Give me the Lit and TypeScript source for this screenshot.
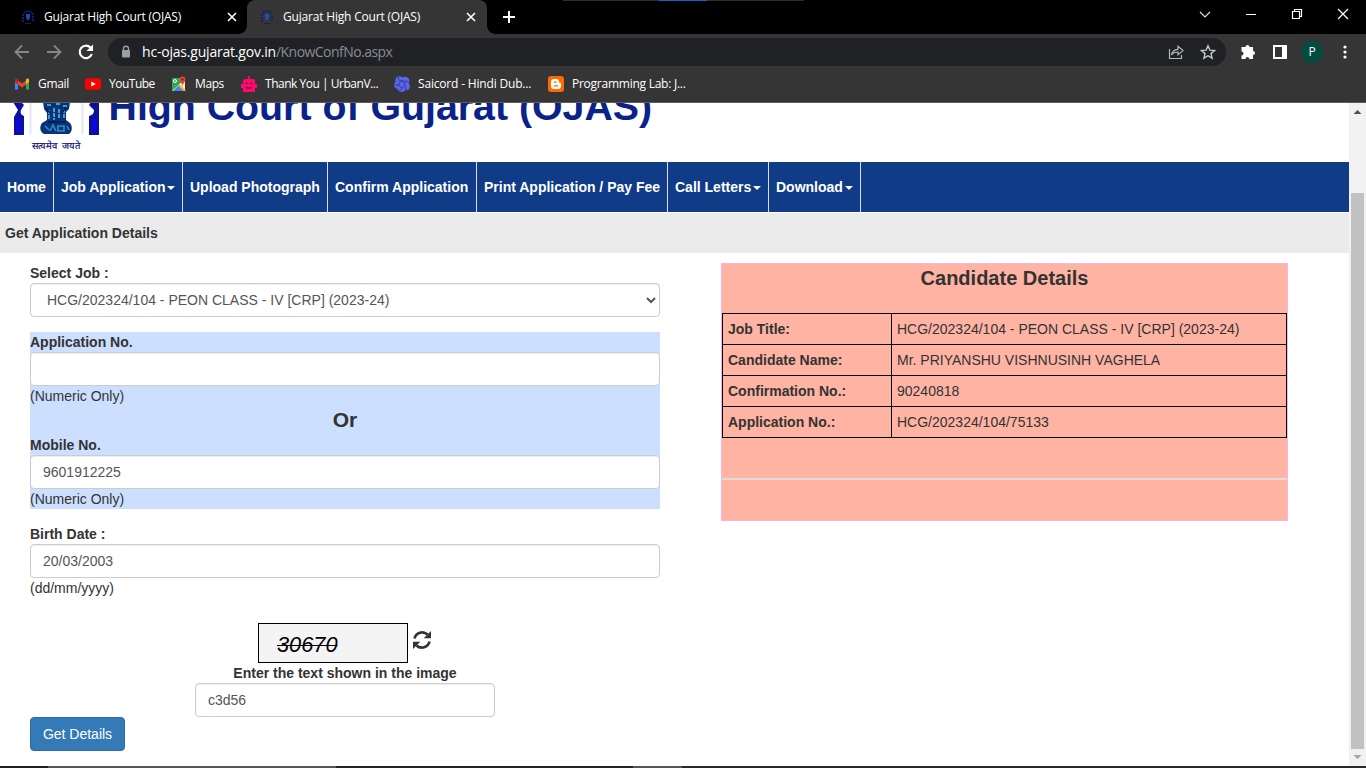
import { LitElement, html, css, svg } from "lit";
import { customElement } from "lit/decorators.js";

const favicon = svg`<path d="M3 13V7a5 5 0 0 1 10 0v6" fill="none" stroke="#18206e" stroke-width="2" stroke-dasharray="2 1"/><path d="M6 5h4v3l-1 3H7L6 8z" fill="#1d4fae"/><path d="M5 14.500h6" stroke="#1b1f4d"/>`;

@customElement("browser-chrome")
export class BrowserChrome extends LitElement {
  static styles = css`
    :host { display: block; position: relative; height: 103px; background: #353535; color: #fff; font: 12px/16px "Open Sans", "Noto Sans", sans-serif; box-sizing: border-box; border-bottom: 1px solid #5b5b5b; }
    svg { display: block; flex: none; }
    .edge { position: absolute; top: 0; left: 563px; width: 241px; height: 1px; background: linear-gradient(90deg, #2d2d2d 96px, #0a67c4 96px 144px, #2d2d2d 144px); }
    .tabs { display: flex; height: 34px; background: #000; }
    .tab { display: flex; align-items: center; box-sizing: border-box; width: 247px; padding: 0 9px 0 20px; }
    .tab.active { width: 240px; padding-left: 12px; background: #353535; border-radius: 8px 8px 0 0; padding-right: 10px; position: relative; }
    .tab.active::before, .tab.active::after { content: ""; position: absolute; bottom: 0; width: 8px; height: 8px; }
    .tab.active::before { left: -8px; background: radial-gradient(circle at 0 0, #000 7.500px, #353535 8px); }
    .tab.active::after { right: -8px; background: radial-gradient(circle at 100% 0, #000 7.500px, #353535 8px); }
    .label { flex: 1; margin-left: 8px; white-space: nowrap; letter-spacing: -.19px; }
    .plus { margin: 10px 0 0 15px; }
    .win { display: flex; margin-left: auto; padding: 7px 15px 0 0; gap: 30px; }
    .tools { display: flex; align-items: center; height: 36px; padding-left: 14px; }
    .back { margin-right: 16px; }
    .fwd { margin-right: 15px; }
    .omni { display: flex; align-items: center; box-sizing: border-box; width: 1118px; height: 28px; margin-left: 13px; padding: 0 10px 0 12px; border-radius: 14px; background: #202124; font-size: 14px; line-height: 28px; }
    .url { margin-left: 10px; flex: 1; letter-spacing: -.2px; }
    .path { color: #9aa0a6; opacity: .85; letter-spacing: -.54px; }
    .star { margin-left: 16px; }
    .ext { margin-left: 14px; }
    .panel { margin-left: 17px; }
    .avatar { width: 22px; height: 22px; margin-left: 14px; border-radius: 50%; background: #004d40; text-align: center; line-height: 22px; }
    .dots { margin-left: 20px; }
    .marks { display: flex; align-items: center; height: 28px; padding-left: 14px; }
    .mark { display: flex; align-items: center; gap: 8px; box-sizing: border-box; white-space: nowrap; }
    .gm { width: 71px; letter-spacing: -.3px; } .yt { width: 86px; letter-spacing: -.5px; } .mp { width: 70px; letter-spacing: -.4px; }
    .uv { width: 153px; letter-spacing: -.48px; } .sc { width: 154px; letter-spacing: -.18px; } .bl { letter-spacing: -.25px; }
  `;
  tab(active: boolean) {
    return html`<div class="tab ${active ? "active" : ""}">
      <svg width="16" height="16" viewBox="0 0 16 16">${favicon}</svg>
      <span class="label">Gujarat High Court (OJAS)</span>
      <svg width="12" height="12" viewBox="0 0 12 12"><path d="M2 2l8 8M10 2l-8 8" stroke="#fff" stroke-width="1.600"/></svg>
    </div>`;
  }
  render() {
    return html`
      <div class="tabs">
        ${this.tab(false)}${this.tab(true)}
        <svg class="plus" width="14" height="14" viewBox="0 0 14 14"><path d="M7 1v12M1 7h12" stroke="#fff" stroke-width="2"/></svg>
        <div class="win">
          <svg width="16" height="16" viewBox="0 0 16 16"><path d="M3 5l5 5 5-5" fill="none" stroke="#ddd" stroke-width="1.200"/></svg>
          <svg width="16" height="16" viewBox="0 0 16 16"><path d="M3 7.500h10" stroke="#fff"/></svg>
          <svg width="16" height="16" viewBox="0 0 16 16"><path d="M3.500 4.500h7v7h-7zM5.500 4V2.500h7v7H11" fill="none" stroke="#fff" stroke-width="1.200"/></svg>
          <svg width="16" height="16" viewBox="0 0 16 16"><path d="M3 2l10 10M13 2L3 12" stroke="#fff" stroke-width="1.200"/></svg>
        </div>
      </div>
      <div class="edge"></div>
      <div class="tools">
        <svg class="back" width="16" height="16" viewBox="0 0 16 16"><path d="M15 8H2M8 1.500L1.500 8 8 14.500" fill="none" stroke="#868686" stroke-width="1.800"/></svg>
        <svg class="fwd" width="16" height="16" viewBox="0 0 16 16"><path d="M1 8h13M8 1.500L14.500 8 8 14.500" fill="none" stroke="#868686" stroke-width="1.800"/></svg>
        <svg width="18" height="18" viewBox="0 0 18 18"><path d="M14.800 11A6.200 6.200 0 1 1 13.400 4.600" fill="none" stroke="#fff" stroke-width="2.200"/><path d="M16 1.500V8H9.500z" fill="#fff"/></svg>
        <div class="omni">
          <svg width="12" height="14" viewBox="0 0 12 14"><path d="M3.500 6V3.700a2.500 2.500 0 0 1 5 0V6" fill="none" stroke="#9aa0a6" stroke-width="1.400"/><rect x="2" y="5" width="8" height="7.500" rx="1" fill="#9aa0a6"/></svg>
          <span class="url">hc-ojas.gujarat.gov.in<span class="path">/KnowConfNo.aspx</span></span>
          <svg width="16" height="16" viewBox="0 0 16 16"><path d="M1.500 5v9.500h12V11M3.500 11c.6-4 3-5.500 6.500-5.700V2.200L15.200 6.500 10 10.800V8c-3 0-5 .8-6.500 3z" fill="none" stroke="#b4b7ba" stroke-width="1.200"/></svg>
          <svg class="star" width="16" height="16" viewBox="0 0 16 16"><path d="M8 1.800l1.900 4.300 4.700.4-3.600 3.100 1.100 4.600L8 11.700l-4.100 2.500L5 9.600 1.400 6.500l4.700-.4z" fill="none" stroke="#c5c7c9" stroke-width="1.400"/></svg>
        </div>
        <svg class="ext" width="16" height="16" viewBox="0 0 16 16"><path d="M2 3h3.500a2 2 0 0 1 4 0H13v4a2 2 0 0 1 0 4v4H9.300a1.900 1.900 0 0 0-3.800 0H1.500v-3.500a2 2 0 0 0 0-4V3z" fill="#fff"/></svg>
        <svg class="panel" width="14" height="14" viewBox="0 0 14 14"><path d="M0 0h14v14H0zM2 2v10h7V2z" fill="#fff" fill-rule="evenodd"/></svg>
        <div class="avatar">P</div>
        <svg class="dots" width="4" height="14" viewBox="0 0 4 14" fill="#fff"><circle cx="2" cy="2" r="1.600"/><circle cx="2" cy="7" r="1.600"/><circle cx="2" cy="12" r="1.600"/></svg>
      </div>
      <div class="marks">
        <div class="mark gm"><svg width="16" height="16" viewBox="0 0 16 16"><path d="M1 3.500v10h3V8z" fill="#4285f4"/><path d="M15 3.500v10h-3V8z" fill="#34a853"/><path d="M4 4.500l4 3 4-3v4l-4 3-4-3z" fill="#ea4335"/><path d="M1 4c0-2 1.500-2 3-.7v5L1 6z" fill="#c5221f"/><path d="M15 4c0-2-1.500-2-3-.7v5l3-2.300z" fill="#fbbc04"/></svg>Gmail</div>
        <div class="mark yt"><svg width="16" height="16" viewBox="0 0 16 16"><rect y="2.200" width="16" height="11.600" rx="2.800" fill="#f00"/><path d="M6.300 5.500v5l4.500-2.500z" fill="#fff"/></svg>YouTube</div>
        <div class="mark mp"><svg width="16" height="16" viewBox="0 0 16 16"><rect x="1" y="2" width="13" height="13" rx="1" fill="#34a853"/><path d="M1 15L14 3v12z" fill="#e8eaed"/><path d="M2 15l6-6 6 6z" fill="#4285f4"/><path d="M7 9.500l1.500-1.500 6 6v1h-2z" fill="#fbbc04"/><circle cx="4" cy="5" r="1.500" fill="none" stroke="#fff"/><path d="M11.500 10C11.500 7.500 8.500 6 8.500 3.500a3 3 0 0 1 6 0c0 2.500-3 4-3 6.500z" fill="#ea4335"/><circle cx="11.500" cy="3.500" r="1.100" fill="#811411"/></svg>Maps</div>
        <div class="mark uv"><svg width="16" height="16" viewBox="0 0 16 16"><path d="M7.200 0h1.600v3H12a2 2 0 0 1 2 2v3h2v4h-2v4H2v-4H0V8h2V5a2 2 0 0 1 2-2h3.200z" fill="#ff0a6c"/><path d="M4.500 7.500h2M9.500 7.500h2M5 11c1.500 1.500 4.500 1.500 6 0" fill="none" stroke="#6b1540" stroke-width="1.500"/></svg>Thank You | UrbanV...</div>
        <div class="mark sc"><svg width="16" height="16" viewBox="0 0 16 16"><g fill="#5865f2"><circle cx="5.500" cy="4.500" r="4.200"/><circle cx="11.200" cy="5" r="4.200"/><circle cx="12" cy="10.300" r="3.900"/><circle cx="7.500" cy="12" r="4"/><circle cx="3.900" cy="9" r="3.800"/></g><path d="M6 5c4-2 6.500 1 4.500 4.500S4.500 11 5 8s4-3 5-1M5 1c-1 2-.5 3 1 4M14.500 6c-1.500-1-3-1-4 0M12 14c0-2-.5-3-1.500-4.500M5 15c1.500-.5 2.500-1.500 3-3.500M1 8.500c1.500 1 3 1 4 0" fill="none" stroke="#343a72" stroke-width=".9"/></svg>Saicord - Hindi Dub...</div>
        <div class="mark bl"><svg width="16" height="16" viewBox="0 0 16 16"><rect width="16" height="16" rx="3" fill="#ff6a00"/><path d="M6 3h2.500A2.500 2.500 0 0 1 11 5.500c0 1 .3 1.300 1 1.300.8 0 1 .4 1 1.200v2a3 3 0 0 1-3 3H6a3 3 0 0 1-3-3V6a3 3 0 0 1 3-3z" fill="#fff"/><path d="M6.200 6.200h2M6.200 9.800h3.600" stroke="#ff6a00" stroke-width="1.300" stroke-linecap="round"/></svg>Programming Lab: J...</div>
      </div>`;
  }
}

const MENU: [string, number, boolean][] = [
  ["Home", 54, false], ["Job Application", 129, true], ["Upload Photograph", 145, false], ["Confirm Application", 149, false],
  ["Print Application / Pay Fee", 191, false], ["Call Letters", 101, true], ["Download", 92, true],
];
const DETAILS = [
  ["Job Title:", "HCG/202324/104 - PEON CLASS - IV [CRP] (2023-24)"],
  ["Candidate Name:", "Mr. PRIYANSHU VISHNUSINH VAGHELA"],
  ["Confirmation No.:", "90240818"],
  ["Application No.:", "HCG/202324/104/75133"],
];

@customElement("app-root")
export class AppRoot extends LitElement {
  static styles = css`
    :host { display: flex; flex-direction: column; width: 1366px; height: 768px; overflow: hidden; background: #fff; color: #333; font: 14px/20px "Liberation Sans", Arial, sans-serif; }
    * { box-sizing: border-box; }
    svg { display: block; }
    browser-chrome { flex: none; }
    .view { display: flex; height: 663px; }
    .page { width: 1349px; overflow: hidden; }
    .taskbar { height: 2px; background: linear-gradient(90deg, #202020 48px, #555 48px 336px, #242428 336px 633px, #555 633px 682px, #28282a 682px); }
    .banner { display: flex; height: 59px; overflow: hidden; }
    .emblem { width: 100px; margin-right: 8.500px; }
    .motto { display: block; margin: 2px 0 0 32px; color: #15157b; font-size: 9.500px; line-height: 15px; white-space: nowrap; -webkit-text-stroke: .2px #15157b; }
    .title { margin: -19px 0 0; color: #0b2389; font-size: 39.300px; line-height: 45px; font-weight: bold; white-space: nowrap; }
    .menu { display: flex; height: 51px; border-bottom: 1px solid #fff; background: #103b87; color: #fff; font-weight: bold; line-height: 50px; }
    .item { display: flex; align-items: center; padding-left: 7px; border-right: 1px solid #ddd; white-space: nowrap; }
    .caret { width: 0; margin: 2px 0 0 2px; border: 4px solid transparent; border-top-color: #fff; border-bottom: 0; }
    .crumb { height: 40px; padding: 10px 5px; background: #ebebeb; font-weight: bold; }
    .cols { display: flex; align-items: flex-start; padding: 10px 0 0 30px; }
    .form { width: 630px; margin-right: 61px; }
    label { display: block; font-weight: bold; }
    .control { display: block; width: 100%; height: 34px; padding: 6px 12px; border: 1px solid #ccc; border-radius: 4px; background: #fff; color: #555; font: 14px/20px "Liberation Sans", Arial, sans-serif; box-shadow: inset 0 1px 1px rgba(0, 0, 0, .075); }
    .either { margin: 15px 0; background: #ccdfff; }
    .or { height: 29px; font-size: 21px; font-weight: bold; line-height: 27px; text-align: center; }
    .captcha { display: flex; margin: 25px 0 0 228px; }
    .code { width: 150px; height: 40px; padding-left: 18px; border: 1px solid #000; background: #f4f4f4; color: #000; font-size: 21.800px; font-style: italic; line-height: 42px; text-decoration: line-through; text-decoration-thickness: 1px; }
    .refresh { margin: 7px 0 0 4px; }
    .prompt { text-align: center; }
    .answer { width: 300px; margin: 0 auto; }
    .submit { display: block; width: 95px; height: 34px; padding: 0; border: 1px solid #2e6da4; border-radius: 4px; background: #337ab7; color: #fff; font: 14px/20px "Liberation Sans", Arial, sans-serif; }
    .card { width: 567px; height: 258px; border: 1px solid #f8b2ec; background: #ffb3a3; }
    .head { height: 49px; margin: 0; font-size: 20px; line-height: 29px; text-align: center; font-weight: bold; }
    .rows { border: solid #000; border-width: 1px 1px 0; }
    .row { display: grid; grid-template-columns: 169px 1fr; height: 31px; border-bottom: 1px solid #000; line-height: 30px; }
    .key { padding-left: 5px; border-right: 1px solid #000; font-weight: bold; }
    .val { padding-left: 5px; }
    .rule { height: 2px; margin-top: 40px; background: #ddd; }
    .scroll { display: flex; flex-direction: column; align-items: center; width: 17px; background: #f1f1f1; }
    .thumb { width: 13px; height: 556px; margin-top: 73px; background: #c1c1c1; }
  `;
  render() {
    return html`
      <browser-chrome></browser-chrome>
      <div class="view">
        <div class="page">
          <div class="banner">
            <div class="emblem">
              <svg width="100" height="33" viewBox="0 1 100 33">
                <path d="M13 0h8l3 3-3 5c-1 3 0 5 3 6v19H14V15l4-7zM99 0h-8l-2 3 5 5c0 3-1 5-5 6v19h10z" fill="#0c10a0"/>
                <path d="M16 17h4v13h-4zM92 17h4v13h-4z" fill="#0a0ae0"/>
                <path d="M30.500 0v32M82.500 0v32" stroke="#e4e8f1" stroke-width="2"/>
                <path d="M43 0h27l-1 7-3 3v8l4 3c3 4 2 9-1 11H44c-4-2-5-7-2-11l5-3v-7l-3-4z" fill="#0a3278"/>
                <path d="M47 3h4M56 2h4M63 4h4M49 8v9M54 6v12M59 7v10M64 7v9" stroke="#3da0cf" stroke-width="2" stroke-dasharray="4 1"/>
                <path d="M45 24l4 4M50 29l3-6 3 6M58 24h6v5h-6zM67 24l2 4" fill="none" stroke="#2a91c5" stroke-width="1.600"/>
                <path d="M46 6l4 5M66 5l-4 6M48 20h18" stroke="#081a4c" stroke-width="1.500"/>
              </svg>
              <span class="motto">सत्यमेव&nbsp; जयते</span>
            </div>
            <h1 class="title">High Court of Gujarat (OJAS)</h1>
          </div>
          <nav class="menu">
            ${MENU.map(([text, w, sub]) => html`<div class="item" style="width:${w}px">${text}${sub ? html`<span class="caret"></span>` : ""}</div>`)}
          </nav>
          <div class="crumb">Get Application Details</div>
          <div class="cols">
            <div class="form">
              <label>Select Job :</label>
              <select class="control"><option>HCG/202324/104 - PEON CLASS - IV [CRP] (2023-24)</option></select>
              <div class="either">
                <label>Application No.</label>
                <input class="control">
                <div>(Numeric Only)</div>
                <div class="or">Or</div>
                <label>Mobile No.</label>
                <input class="control" value="9601912225">
                <div>(Numeric Only)</div>
              </div>
              <label>Birth Date :</label>
              <input class="control" value="20/03/2003">
              <div>(dd/mm/yyyy)</div>
              <div class="captcha">
                <div class="code">30670</div>
                <svg class="refresh" width="20" height="20" viewBox="0 0 20 20"><path d="M2.500 8.500A7.800 7.800 0 0 1 15.500 4.500M17.500 11.500A7.800 7.800 0 0 1 4.500 15.500" fill="none" stroke="#333" stroke-width="2.700"/><path d="M19 1v7.300h-7.300zM1 19v-7.300h7.300z" fill="#333"/></svg>
              </div>
              <label class="prompt">Enter the text shown in the image</label>
              <input class="control answer" value="c3d56">
              <button class="submit">Get Details</button>
            </div>
            <div class="card">
              <h2 class="head">Candidate Details</h2>
              <div class="rows">
                ${DETAILS.map(([k, v]) => html`<div class="row"><div class="key">${k}</div><div class="val">${v}</div></div>`)}
              </div>
              <div class="rule"></div>
            </div>
          </div>
        </div>
        <div class="scroll">
          <svg width="17" height="17" viewBox="0 0 17 17"><path d="M4.500 11h8L8.500 7z" fill="#505050"/></svg>
          <div class="thumb"></div>
          <svg width="17" height="17" viewBox="0 0 17 17"><path d="M4.500 6h8L8.500 10z" fill="#a3a3a3"/></svg>
        </div>
      </div>
      <div class="taskbar"></div>`;
  }
}
